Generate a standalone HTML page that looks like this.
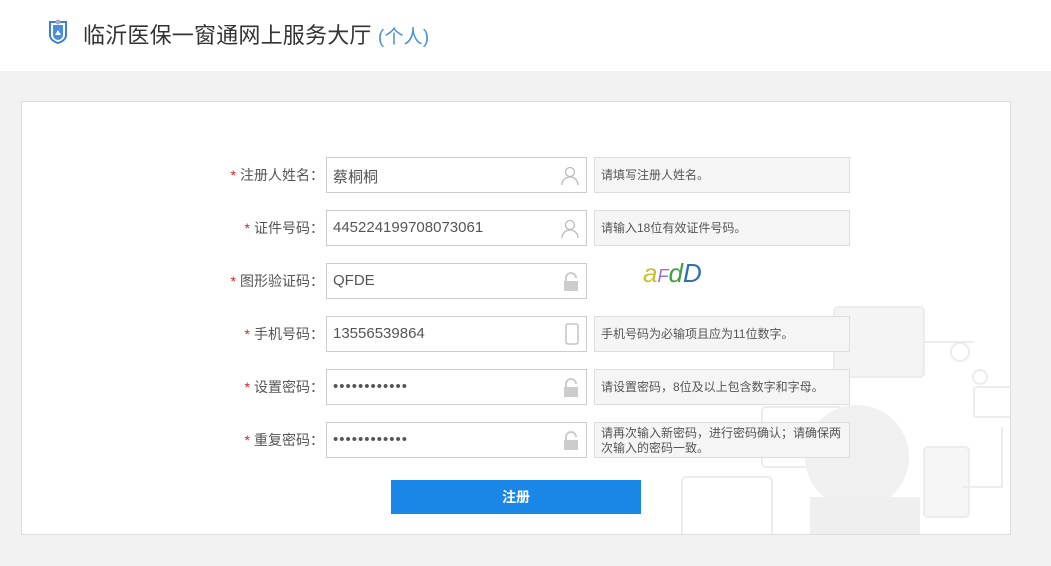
<!DOCTYPE html><html><head><meta charset="utf-8"><style>
*{margin:0;padding:0;box-sizing:border-box}
body{width:1051px;height:566px;background:#f2f2f2;font-family:"Liberation Sans","Noto Sans CJK SC",sans-serif;position:relative;overflow:hidden}
.hd{position:absolute;left:0;top:0;width:1051px;height:71px;background:#fff}
.title{position:absolute;left:83px;top:18px;font-size:22px;color:#333;letter-spacing:0.2px}
.title span{color:#4a90d9;font-size:19px}
.panel{position:absolute;left:21px;top:101px;width:990px;height:434px;background:#fff;border:1px solid #ddd;overflow:hidden}
.lbl{position:absolute;width:124px;text-align:right;font-size:14px;color:#555;left:200px}
.lbl b{color:#e02020;font-weight:normal;margin-right:4px}
.inp{position:absolute;left:326px;width:261px;height:36px;border:1px solid #ccc;background:#fff;font-size:15px;color:#555;padding:8px 0 0 6px}
.hint{position:absolute;left:594px;width:256px;height:36px;border:1px solid #ddd;background:#f5f5f5;font-size:12px;color:#555;padding:10px 0 0 6px;line-height:15px}
.ic{position:absolute;right:7px;top:8px}
.btn{position:absolute;left:391px;top:480px;width:250px;height:34px;background:#1a87e6;color:#fff;font-size:14px;font-weight:bold;text-align:center;line-height:34px}
</style></head><body>
<div class="hd">
<svg style="position:absolute;left:47px;top:18px" width="22" height="27" viewBox="0 0 22 27"><path d="M2 3h18v14c0 5-5 8-9 9-4-1-9-4-9-9z" fill="#3d7fd0"/><path d="M4 5h14v12c0 4-4 6-7 7-3-1-7-3-7-7z" fill="#fff"/><path d="M6 7h10v10c0 3-3 5-5 5-2 0-5-2-5-5z" fill="#4a8de0"/><circle cx="11" cy="4" r="2.5" fill="#aac"/><path d="M8 17l3-5 3 5z" fill="#fff"/></svg>
<div class="title">临沂医保一窗通网上服务大厅 <span>(个人)</span></div>
</div>
<div class="panel">
<svg style="position:absolute;left:640px;top:195px" width="350" height="240" viewBox="0 0 350 240" fill="none" stroke="#ececec" stroke-width="2">
<rect x="172" y="10" width="90" height="70" rx="4" fill="#f4f4f4"/>
<rect x="100" y="110" width="80" height="60" rx="4"/>
<rect x="262" y="150" width="45" height="70" rx="4" fill="#f6f6f6"/>
<circle cx="195" cy="160" r="52" fill="#f0f0f0" stroke="none"/>
<rect x="148" y="200" width="110" height="45" fill="#efefef" stroke="none"/>
<rect x="20" y="180" width="90" height="60" rx="4"/>
<rect x="312" y="90" width="40" height="30" rx="3"/>
<circle cx="298" cy="55" r="9"/><circle cx="318" cy="80" r="7"/>
<path d="M262 45h50M110 130h-40M300 190h40v-60"/>
</svg>
</div>
<div class="lbl" style="top:165px"><b>*</b>注册人姓名：</div>
<div class="inp" style="top:157px">蔡桐桐<svg class="ic" width="18" height="20" viewBox="0 0 18 20" fill="none" stroke="#bbb" stroke-width="1.3"><circle cx="9" cy="6" r="4.5"/><path d="M1 19c0-5 4-8 8-8s8 3 8 8"/></svg></div>
<div class="hint" style="top:157px">请填写注册人姓名。</div>
<div class="lbl" style="top:218px"><b>*</b>证件号码：</div>
<div class="inp" style="top:210px">445224199708073061<svg class="ic" width="18" height="20" viewBox="0 0 18 20" fill="none" stroke="#bbb" stroke-width="1.3"><circle cx="9" cy="6" r="4.5"/><path d="M1 19c0-5 4-8 8-8s8 3 8 8"/></svg></div>
<div class="hint" style="top:210px">请输入18位有效证件号码。</div>
<div class="lbl" style="top:271px"><b>*</b>图形验证码：</div>
<div class="inp" style="top:263px">QFDE<svg class="ic" width="16" height="20" viewBox="0 0 16 20"><path d="M3 9V6a5 5 0 0 1 10 0" fill="none" stroke="#ccc" stroke-width="2"/><rect x="1" y="9" width="14" height="10" fill="#ccc"/></svg></div>
<div style="position:absolute;left:643px;top:258px;font-size:26px;font-style:italic;font-family:'Liberation Sans',sans-serif"><span style="color:#c8c030">a</span><span style="color:#a070c0;font-size:18px">F</span><span style="color:#40a040">d</span><span style="color:#3070b0">D</span></div>
<div class="lbl" style="top:324px"><b>*</b>手机号码：</div>
<div class="inp" style="top:316px">13556539864<svg class="ic" width="14" height="22" viewBox="0 0 14 22" style="top:6px"><rect x="1" y="1" width="12" height="20" rx="2" fill="none" stroke="#bbb" stroke-width="1.3"/></svg></div>
<div class="hint" style="top:316px">手机号码为必输项且应为11位数字。</div>
<div class="lbl" style="top:377px"><b>*</b>设置密码：</div>
<div class="inp" style="top:369px;letter-spacing:1px">••••••••••••<svg class="ic" width="16" height="20" viewBox="0 0 16 20"><path d="M3 9V6a5 5 0 0 1 10 0" fill="none" stroke="#ccc" stroke-width="2"/><rect x="1" y="9" width="14" height="10" fill="#ccc"/></svg></div>
<div class="hint" style="top:369px">请设置密码，8位及以上包含数字和字母。</div>
<div class="lbl" style="top:430px"><b>*</b>重复密码：</div>
<div class="inp" style="top:422px;letter-spacing:1px">••••••••••••<svg class="ic" width="16" height="20" viewBox="0 0 16 20"><path d="M3 9V6a5 5 0 0 1 10 0" fill="none" stroke="#ccc" stroke-width="2"/><rect x="1" y="9" width="14" height="10" fill="#ccc"/></svg></div>
<div class="hint" style="top:422px;padding-top:3px">请再次输入新密码，进行密码确认；请确保两次输入的密码一致。</div>
<div class="btn">注册</div>
</body></html>
